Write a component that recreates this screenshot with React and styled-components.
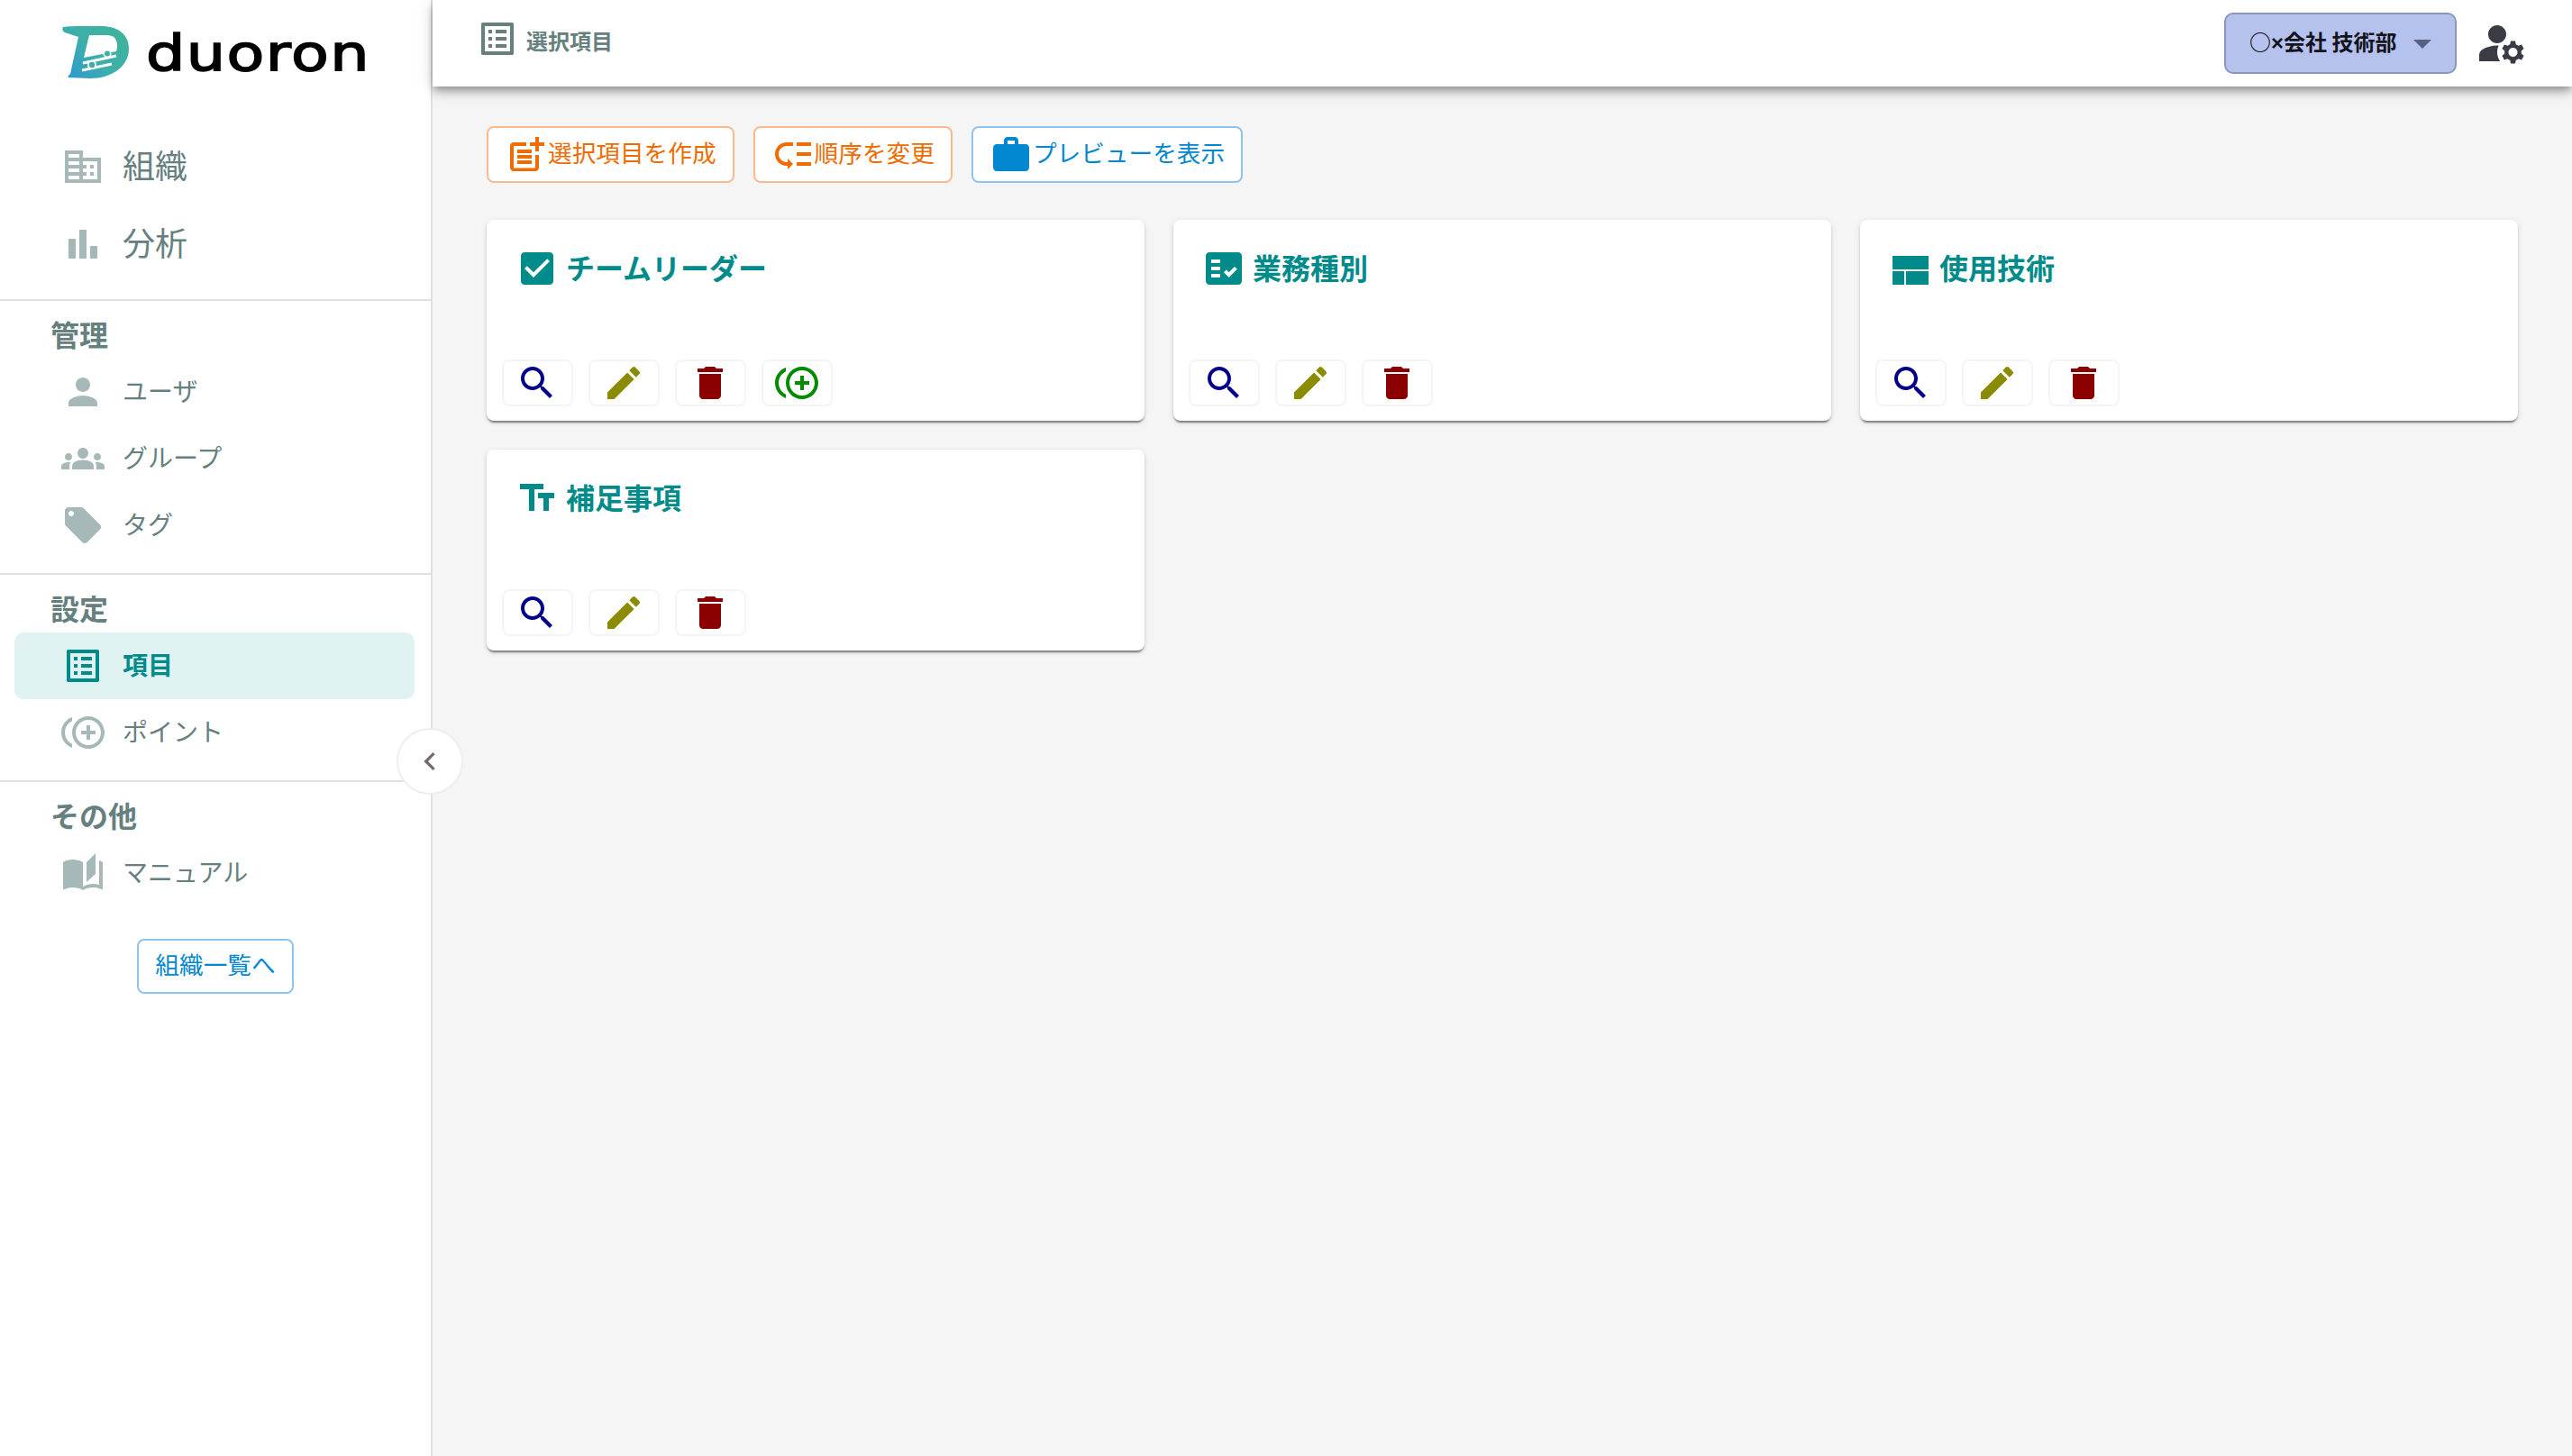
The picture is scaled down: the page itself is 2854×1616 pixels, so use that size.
import React from "react";
import styled, { createGlobalStyle } from "styled-components";

const GlobalStyle = createGlobalStyle`
  html, body { margin: 0; padding: 0; background: #f5f5f5; }
  body { font-family: "Noto Sans CJK JP", "Noto Sans", sans-serif; }
  * { box-sizing: border-box; }
`;

const P = {
  search: "M15.5 14h-.79l-.28-.27C15.41 12.59 16 11.11 16 9.5 16 5.91 13.09 3 9.5 3S3 5.91 3 9.5 5.91 16 9.5 16c1.61 0 3.09-.59 4.23-1.57l.27.28v.79l5 4.99L20.49 19l-4.99-5zm-6 0C7.01 14 5 11.99 5 9.5S7.01 5 9.5 5 14 7.01 14 9.5 11.99 14 9.5 14z",
  edit: "M3 17.25V21h3.75L17.81 9.94l-3.75-3.75L3 17.25zM20.71 7.04c.39-.39.39-1.02 0-1.41l-2.34-2.34c-.39-.39-1.02-.39-1.41 0l-1.83 1.83 3.75 3.75 1.83-1.83z",
  del: "M6 19c0 1.1.9 2 2 2h8c1.1 0 2-.9 2-2V7H6v12zM19 4h-3.5l-1-1h-5l-1 1H5v2h14V4z",
  point: "M16 8h-2v3h-3v2h3v3h2v-3h3v-2h-3zM2 12c0-2.79 1.64-5.2 4.01-6.32V3.52C2.52 4.76 0 8.09 0 12s2.52 7.24 6.01 8.48v-2.16C3.64 17.2 2 14.79 2 12zm13-9c-4.96 0-9 4.04-9 9s4.04 9 9 9 9-4.04 9-9-4.04-9-9-9zm0 16c-3.86 0-7-3.14-7-7s3.14-7 7-7 7 3.14 7 7-3.14 7-7 7z",
  check: "M19 3H5c-1.11 0-2 .9-2 2v14c0 1.1.89 2 2 2h14c1.11 0 2-.9 2-2V5c0-1.1-.89-2-2-2zm-9 14l-5-5 1.41-1.41L10 14.17l7.59-7.59L19 8l-9 9z",
  fact: "M20 3H4c-1.1 0-2 .9-2 2v14c0 1.1.9 2 2 2h16c1.1 0 2-.9 2-2V5c0-1.1-.9-2-2-2zM10 17H5v-2h5v2zm0-4H5v-2h5v2zm0-4H5V7h5v2zm4.82 8L12 14.16l1.41-1.41 1.41 1.42L17.99 11l1.42 1.42L14.82 17z",
  quilt: "M2 5h20v7.5H2zM2 13.5h6.5V21H2zM9.5 13.5H22V21H9.5z",
  text: "M2.5 4v3h5v12h3V7h5V4h-13zm19 5h-9v3h3v7h3v-7h3V9z",
  listAlt: "M19 5v14H5V5h14m1.1-2H3.9c-.5 0-.9.4-.9.9v16.2c0 .4.4.9.9.9h16.2c.4 0 .9-.5.9-.9V3.9c0-.5-.5-.9-.9-.9zM11 7h6v2h-6V7zm0 4h6v2h-6v-2zm0 4h6v2h-6zM7 7h2v2H7zm0 4h2v2H7zm0 4h2v2H7z",
  business: "M12 7V3H2v18h20V7H12zM10 19H4v-2h6v2zm0-4H4v-2h6v2zm0-4H4V9h6v2zm0-4H4V5h6v2zm10 12h-8v-2h2v-2h-2v-2h2v-2h-2V9h8v10zm-2-8h-2v2h2v-2zm0 4h-2v2h2v-2z",
  bars: "M4 9h4v11H4zm12 4h4v7h-4zm-6-9h4v16h-4z",
  person: "M12 12c2.21 0 4-1.79 4-4s-1.79-4-4-4-4 1.79-4 4 1.79 4 4 4zm0 2c-2.67 0-8 1.34-8 4v2h16v-2c0-2.66-5.33-4-8-4z",
  groups: "M12 12.75c1.63 0 3.07.39 4.24.9 1.08.48 1.76 1.56 1.76 2.73V18H6v-1.61c0-1.18.68-2.26 1.76-2.73 1.17-.52 2.61-.91 4.24-.91zM4 13c1.1 0 2-.9 2-2s-.9-2-2-2-2 .9-2 2 .9 2 2 2zm1.13 1.1c-.37-.06-.74-.1-1.13-.1-.99 0-1.93.21-2.78.58C.48 14.9 0 15.62 0 16.43V18h4.5v-1.61c0-.83.23-1.61.63-2.29zM20 13c1.1 0 2-.9 2-2s-.9-2-2-2-2 .9-2 2 .9 2 2 2zm4 3.43c0-.81-.48-1.53-1.22-1.85-.85-.37-1.79-.58-2.78-.58-.39 0-.76.04-1.13.1.4.68.63 1.46.63 2.29V18H24v-1.57zM12 6c1.66 0 3 1.34 3 3s-1.34 3-3 3-3-1.34-3-3 1.34-3 3-3z",
  tag: "M21.41 11.58l-9-9C12.05 2.22 11.55 2 11 2H4c-1.1 0-2 .9-2 2v7c0 .55.22 1.05.59 1.42l9 9c.36.36.86.58 1.41.58.55 0 1.05-.22 1.41-.59l7-7c.37-.36.59-.86.59-1.41 0-.55-.23-1.06-.59-1.42zM5.5 7C4.67 7 4 6.33 4 5.5S4.67 4 5.5 4 7 4.67 7 5.5 6.33 7 5.5 7z",
  stories: "M19 1l-5 5v11l5-4.5V1zM1 6v14.65c0 .25.25.5.5.5.1 0 .15-.05.25-.05C3.1 20.45 5.05 20 6.5 20c1.95 0 4.05.4 5.5 1.5V6c-1.45-1.1-3.55-1.5-5.5-1.5S2.45 4.9 1 6zm22 13.5V6c-.6-.45-1.25-.75-2-1v13.5c-1.1-.35-2.3-.5-3.5-.5-1.7 0-4.15.65-5.5 1.5v2c1.35-.85 3.8-1.5 5.5-1.5 1.65 0 3.35.3 4.75 1.05.1.05.15.05.25.05.25 0 .5-.25.5-.5v-1.1z",
  chevron: "M15.41 7.41L14 6l-6 6 6 6 1.41-1.41L10.83 12z",
  arrow: "M7 10l5 5 5-5z",
  manage: "M10.67 13.02c-.22-.01-.44-.02-.67-.02-2.42 0-4.68.67-6.61 1.82-.88.52-1.39 1.5-1.39 2.53V20h9.26c-.79-1.13-1.26-2.51-1.26-4 0-1.07.25-2.07.67-2.98zM10 12c2.21 0 4-1.79 4-4s-1.79-4-4-4-4 1.79-4 4 1.79 4 4 4zM20.75 16c0-.22-.03-.42-.06-.63l1.14-1.01-1-1.73-1.45.49c-.32-.27-.68-.48-1.08-.63L18 11h-2l-.3 1.49c-.4.15-.76.36-1.08.63l-1.45-.49-1 1.73 1.14 1.01c-.03.21-.06.41-.06.63s.03.42.06.63l-1.14 1.01 1 1.73 1.45-.49c.32.27.68.48 1.08.63L16 21h2l.3-1.49c.4-.15.76-.36 1.08-.63l1.45.49 1-1.73-1.14-1.01c.03-.21.06-.41.06-.63zM17 18c-1.1 0-2-.9-2-2s.9-2 2-2 2 .9 2 2-.9 2-2 2z",
  postAdd: "M17 19.22H5V7h7V5H5c-1.1 0-2 .9-2 2v12c0 1.1.9 2 2 2h12c1.1 0 2-.9 2-2v-7h-2v7.22zM19 2h-2v3h-3c.01.01 0 2 0 2h3v2.99c.01.01 2 0 2 0V7h3V5h-3V2zM7 9h8v2H7zM7 12v2h8v-2h-3zM7 15h8v2H7z",
  lowPriority: "M14 5h8v2h-8zm0 5.5h8v2h-8zm0 5.5h8v2h-8zM2 11.5C2 15.08 4.92 18 8.5 18H9v2l3-3-3-3v2h-.5C6.02 16 4 13.98 4 11.5S6.02 7 8.5 7H12V5H8.5C4.92 5 2 7.92 2 11.5z",
  work: "M20 6h-4V4c0-1.11-.89-2-2-2h-4c-1.11 0-2 .89-2 2v2H4c-1.11 0-1.99.89-1.99 2L2 19c0 1.11.89 2 2 2h16c1.11 0 2-.89 2-2V8c0-1.11-.89-2-2-2zm-6 0h-4V4h4v2z",
};

const IconSvg = styled.svg`
  display: block;
  flex: none;
  width: ${(p) => p.$size || 48}px;
  height: ${(p) => p.$size || 48}px;
  fill: ${(p) => p.$color || "currentColor"};
`;
const Icon = ({ d, size, color }) => (
  <IconSvg viewBox="0 0 24 24" $size={size} $color={color}>
    <path fillRule="evenodd" d={d} />
  </IconSvg>
);

/* Text whose glyphs sit a little higher than the font's own centre. */
const Label = styled.span`
  display: block;
  margin-bottom: ${(p) => p.$lift ?? 7}px;
`;

const Page = styled.div`
  display: flex;
  width: 100%;
  height: 1616px;
  overflow: hidden;
  background: #f5f5f5;
`;

const Sidebar = styled.aside`
  position: relative;
  flex: none;
  width: 480px;
  height: 100%;
  background: #fff;
  border-right: 2px solid #e0e0e0;
`;
const LogoArea = styled.div`
  display: flex;
  align-items: flex-start;
  height: 142px;
  padding: 27px 0 0 68px;
`;
const LogoMark = styled.svg`
  display: block;
  flex: none;
  width: 78px;
  height: 63px;
`;
const LogoWord = styled.span`
  margin: -8px 0 0 16px;
  font-family: "DejaVu Sans", sans-serif;
  font-size: 56px;
  line-height: 80px;
  letter-spacing: 1.2px;
  color: #000;
  -webkit-text-stroke: 1.6px #000;
  transform: scaleX(1.22);
  transform-origin: left center;
`;
const Section = styled.section`
  padding: ${(p) => (p.$top ? 0 : 14)}px 0 ${(p) => (p.$last ? 0 : p.$top ? 18 : 16)}px;
  border-bottom: ${(p) => (p.$last ? "none" : "2px solid #e0e0e0")};
`;
const SectionLabel = styled.div`
  height: 50px;
  padding-left: 56px;
  font-size: 32px;
  font-weight: 700;
  line-height: 44px;
  color: #668080;
`;
const NavRow = styled.div`
  display: flex;
  align-items: center;
  gap: 20px;
  height: ${(p) => (p.$large ? 86 : 74)}px;
  margin: 0 18px 0 16px;
  padding-left: 52px;
  border-radius: 10px;
  background: ${(p) => (p.$active ? "#e0f2f1" : "transparent")};
  color: ${(p) => (p.$active ? "#008b8b" : "#668080")};
  font-size: ${(p) => (p.$large ? 36 : 28)}px;
  font-weight: ${(p) => (p.$active ? 700 : 400)};
`;
const OrgButtonWrap = styled.div`
  display: flex;
  justify-content: center;
  margin-top: 36px;
`;
const OrgButton = styled.button`
  display: flex;
  align-items: center;
  justify-content: center;
  width: 174px;
  height: 61px;
  padding: 0;
  background: #fff;
  border: 2px solid #90c4ec;
  border-radius: 8px;
  color: #0288d1;
  font-family: inherit;
  font-size: 26.67px;
`;
const Collapse = styled.button`
  position: absolute;
  top: 808px;
  left: 440px;
  display: flex;
  align-items: center;
  justify-content: center;
  width: 74px;
  height: 74px;
  padding: 0;
  background: #fff;
  border: 2px solid #eeeeee;
  border-radius: 50%;
  color: #756b6b;
`;

const Content = styled.div`
  flex: 1;
  min-width: 0;
  display: flex;
  flex-direction: column;
`;
const Header = styled.header`
  position: relative;
  flex: none;
  display: flex;
  align-items: center;
  justify-content: space-between;
  height: 96px;
  padding: 0 48px;
  background: #fff;
  box-shadow: 0 4px 8px -2px rgba(0, 0, 0, 0.3), 0 8px 10px 0 rgba(0, 0, 0, 0.14), 0 2px 20px 0 rgba(0, 0, 0, 0.12);
`;
const HeaderTitle = styled.div`
  display: flex;
  align-items: center;
  gap: 8px;
  font-size: 24px;
  font-weight: 700;
  color: #668080;
`;
const HeaderIcon = styled.span`
  display: block;
  margin-bottom: 10px;
`;
const HeaderRight = styled.div`
  display: flex;
  align-items: center;
  gap: 20px;
`;
const OrgSelect = styled.div`
  display: flex;
  align-items: center;
  justify-content: space-between;
  width: 258px;
  height: 68px;
  padding: 0 12px 0 26px;
  background: #b6c2ee;
  border: 2px solid #8b95bd;
  border-radius: 10px;
  font-size: 24px;
  font-weight: 700;
  color: #14141c;
  white-space: nowrap;
`;
const Times = styled.span`
  font-family: "Liberation Sans", sans-serif;
`;

const Main = styled.main`
  flex: 1;
  padding: 44px 60px;
`;
const Toolbar = styled.div`
  display: flex;
  gap: 21px;
  margin-bottom: 41px;
`;
const ToolButton = styled.button`
  display: flex;
  align-items: center;
  height: 63px;
  padding: 0 18px;
  background: #fff;
  border: 2px solid ${(p) => (p.$tone === "blue" ? "#90c4ec" : "#fbb98e")};
  border-radius: 8px;
  color: ${(p) => (p.$tone === "blue" ? "#0288d1" : "#ef6c00")};
  font-family: inherit;
  font-size: 26.67px;
  white-space: nowrap;
`;
const Grid = styled.div`
  display: grid;
  grid-template-columns: repeat(3, 1fr);
  gap: 32px;
`;
const Card = styled.article`
  display: flex;
  flex-direction: column;
  justify-content: space-between;
  height: 223px;
  padding: 30px 17px 16px;
  background: #fff;
  border-radius: 8px;
  box-shadow: 0 4px 2px -2px rgba(0, 0, 0, 0.3), 0 2px 2px 0 rgba(0, 0, 0, 0.2), 0 2px 6px 0 rgba(0, 0, 0, 0.12);
`;
const CardTitle = styled.h2`
  display: flex;
  align-items: center;
  gap: 8px;
  height: 48px;
  margin: 0;
  padding-left: 15px;
  font-size: 32px;
  font-weight: 700;
  line-height: 48px;
  color: #008b8b;
`;
const Actions = styled.div`
  display: flex;
  gap: 17px;
`;
const ActionButton = styled.button`
  display: flex;
  align-items: center;
  justify-content: flex-start;
  width: 79px;
  height: 52px;
  padding: 0 0 0 13px;
  background: #fff;
  border: 2px solid #f5f5f5;
  border-radius: 8px;
`;

const items = [
  { title: "チームリーダー", icon: P.check, point: true },
  { title: "業務種別", icon: P.fact },
  { title: "使用技術", icon: P.quilt },
  { title: "補足事項", icon: P.text },
];

const Logo = () => (
  <LogoMark viewBox="68 27 78 63">
    <defs>
      <linearGradient id="lg" x1="0" y1="1" x2="1" y2="0.3">
        <stop offset="0" stopColor="#2c96d6" />
        <stop offset="0.55" stopColor="#3cb0a8" />
        <stop offset="1" stopColor="#40b29e" />
      </linearGradient>
    </defs>
    <path
      fill="url(#lg)"
      d="M70 30c8-1.5 30-1 42-1 20 0 31 10 31 25 0 20-19 33-43 33l-24-1c-1.5-1 .5-3 2-4l9-41-15-5c-3-1.5-3-4-2-6z"
    />
    <path fill="#fff" d="M99 39h20c10 0 13 9 10 18l-36 7z" />
    <path fill="none" stroke="#fff" strokeWidth="3" d="M92 70l37-8M91 78l33-7" />
    <circle cx="119" cy="59.5" r="4.5" fill="#fff" />
    <circle cx="119" cy="59.5" r="3" fill="#3cb0a8" />
    <circle cx="102" cy="72" r="5" fill="#fff" />
    <circle cx="102" cy="72" r="3.2" fill="#3cb0a8" />
  </LogoMark>
);

const Nav = ({ icon, children, large, active }) => (
  <NavRow $large={large} $active={active}>
    <Icon d={icon} color={active ? "#008b8b" : "#a6b8b8"} />
    <Label $lift={large ? 7 : 5}>{children}</Label>
  </NavRow>
);

export default function App() {
  return (
    <>
      <GlobalStyle />
      <Page>
        <Sidebar>
          <LogoArea>
            <Logo />
            <LogoWord>duoron</LogoWord>
          </LogoArea>
          <Section $top>
            <Nav icon={P.business} large>組織</Nav>
            <Nav icon={P.bars} large>分析</Nav>
          </Section>
          <Section>
            <SectionLabel>管理</SectionLabel>
            <Nav icon={P.person}>ユーザ</Nav>
            <Nav icon={P.groups}>グループ</Nav>
            <Nav icon={P.tag}>タグ</Nav>
          </Section>
          <Section>
            <SectionLabel>設定</SectionLabel>
            <Nav icon={P.listAlt} active>項目</Nav>
            <Nav icon={P.point}>ポイント</Nav>
          </Section>
          <Section $last>
            <SectionLabel>その他</SectionLabel>
            <Nav icon={P.stories}>マニュアル</Nav>
            <OrgButtonWrap>
              <OrgButton><Label>組織一覧へ</Label></OrgButton>
            </OrgButtonWrap>
          </Section>
          <Collapse>
            <Icon d={P.chevron} size={40} />
          </Collapse>
        </Sidebar>
        <Content>
          <Header>
            <HeaderTitle>
              <HeaderIcon>
                <Icon d={P.listAlt} color="#668080" />
              </HeaderIcon>
              <Label>選択項目</Label>
            </HeaderTitle>
            <HeaderRight>
              <OrgSelect>
                <Label $lift={6}>○<Times>×</Times>会社 技術部</Label>
                <Icon d={P.arrow} color="#5a5e80" />
              </OrgSelect>
              <Icon d={P.manage} size={60} color="#3b3b46" />
            </HeaderRight>
          </Header>
          <Main>
            <Toolbar>
              <ToolButton>
                <Icon d={P.postAdd} />
                <Label>選択項目を作成</Label>
              </ToolButton>
              <ToolButton>
                <Icon d={P.lowPriority} />
                <Label>順序を変更</Label>
              </ToolButton>
              <ToolButton $tone="blue">
                <Icon d={P.work} />
                <Label>プレビューを表示</Label>
              </ToolButton>
            </Toolbar>
            <Grid>
              {items.map((it) => (
                <Card key={it.title}>
                  <CardTitle>
                    <Icon d={it.icon} />
                    <Label $lift={4}>{it.title}</Label>
                  </CardTitle>
                  <Actions>
                    <ActionButton><Icon d={P.search} color="#00008b" /></ActionButton>
                    <ActionButton><Icon d={P.edit} color="#8b8b00" /></ActionButton>
                    <ActionButton><Icon d={P.del} color="#8b0000" /></ActionButton>
                    {it.point && <ActionButton><Icon d={P.point} color="#008b00" /></ActionButton>}
                  </Actions>
                </Card>
              ))}
            </Grid>
          </Main>
        </Content>
      </Page>
    </>
  );
}
